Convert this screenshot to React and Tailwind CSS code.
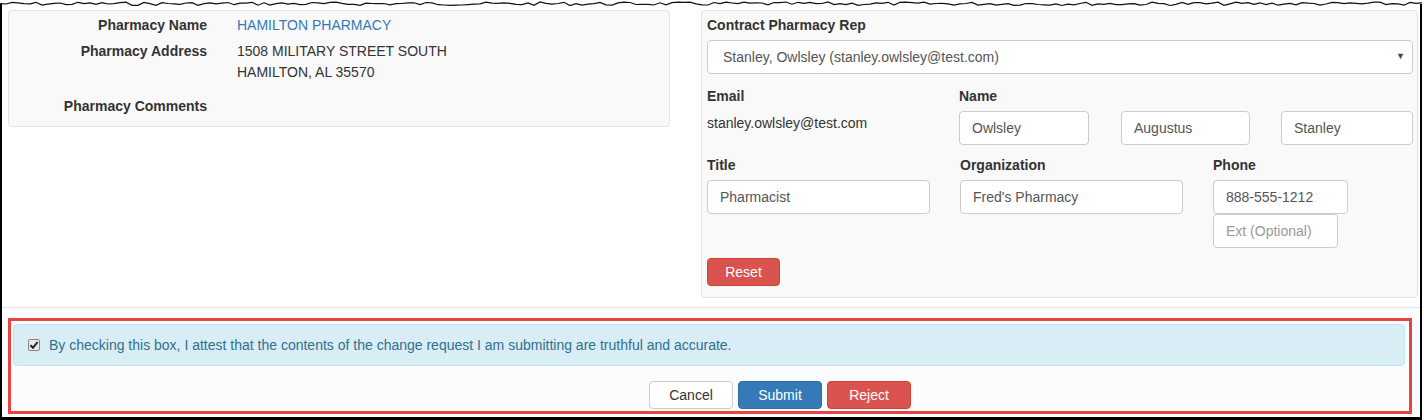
import React from 'react';

const jag = (() => {
  // torn top edge of the screenshot
  const pts = [];
  let seed = 7;
  for (let x = 0; x <= 1422; x += 6) {
    seed = (seed * 9301 + 49297) % 233280;
    const y = 2 + (seed / 233280) * 3.5;
    pts.push(`${x},${y.toFixed(1)}`);
  }
  return pts.join(' ');
})();

const Input = ({ value, placeholder, w }) => (
  <div className={`${w} h-[34px] rounded border border-[#ccc] bg-white pl-[12px] flex items-center text-[14px] ${value ? 'text-[#555]' : 'text-[#999]'}`}>
    {value || placeholder}
  </div>
);

const Label = ({ children }) => (
  <div className="font-bold text-[14px] leading-[20px] text-[#333]">{children}</div>
);

export default function App() {
  return (
    <div className="relative w-[1424px] h-[420px] bg-white font-['Liberation_Sans',Arial,sans-serif] text-[#333] text-[14px] overflow-hidden">
      <svg className="absolute left-0 top-0" width="1424" height="8">
        <polyline points={jag} fill="none" stroke="#111" strokeWidth="1.2" />
      </svg>

      <div className="mt-[4px] w-[1422px] h-[416px] border-l-2 border-r-2 border-b-[3px] border-black flex flex-col">
        {/* top section */}
        <div className="flex items-start pt-[6px] pl-[6px]">
          {/* pharmacy info */}
          <div className="w-[662px] h-[117px] rounded border border-[#e3e3e3] bg-[#f9f9f9] pt-[4px]">
            <div className="flex leading-[20px]">
              <div className="w-[198px] text-right font-bold">Pharmacy Name</div>
              <div className="ml-[30px] text-[#337ab7]">HAMILTON PHARMACY</div>
            </div>
            <div className="flex mt-[6px] leading-[21px]">
              <div className="w-[198px] text-right font-bold leading-[20px]">Pharmacy Address</div>
              <div className="ml-[30px]">
                <div>1508 MILITARY STREET SOUTH</div>
                <div>HAMILTON, AL 35570</div>
              </div>
            </div>
            <div className="flex mt-[13px] leading-[20px]">
              <div className="w-[198px] text-right font-bold">Pharmacy Comments</div>
            </div>
          </div>

          {/* contract pharmacy rep */}
          <div className="ml-[31px] w-[717px] h-[288px] rounded border border-[#e3e3e3] bg-[#f9f9f9] pl-[5px] pr-[4px] pt-[4px]">
            <Label>Contract Pharmacy Rep</Label>
            <div className="mt-[5px] h-[34px] rounded border border-[#ccc] bg-white pl-[15px] pr-[7px] flex items-center justify-between text-[#555]">
              <span>Stanley, Owlsley (stanley.owlsley@test.com)</span>
              <span className="text-[9px] text-[#444]">▼</span>
            </div>

            <div className="flex mt-[12px]">
              <div className="w-[253px]">
                <Label>Email</Label>
                <div className="mt-[7px] leading-[20px]">stanley.owlsley@test.com</div>
              </div>
              <div>
                <Label>Name</Label>
                <div className="flex mt-[5px]">
                  <Input w="w-[130px]" value="Owlsley" />
                  <div className="ml-[32px]"><Input w="w-[129px]" value="Augustus" /></div>
                  <div className="ml-[31px]"><Input w="w-[132px]" value="Stanley" /></div>
                </div>
              </div>
            </div>

            <div className="flex mt-[10px]">
              <div className="w-[253px]">
                <Label>Title</Label>
                <div className="mt-[5px]"><Input w="w-[223px]" value="Pharmacist" /></div>
              </div>
              <div className="w-[253px]">
                <Label>Organization</Label>
                <div className="mt-[5px]"><Input w="w-[223px]" value="Fred's Pharmacy" /></div>
              </div>
              <div>
                <Label>Phone</Label>
                <div className="mt-[5px]"><Input w="w-[135px]" value="888-555-1212" /></div>
                <Input w="w-[125px]" placeholder="Ext (Optional)" />
              </div>
            </div>

            <button className="mt-[10px] w-[73px] h-[28px] rounded border border-[#d43f3a] bg-[#d9534f] text-white text-[14px]">
              Reset
            </button>
          </div>
        </div>

        {/* footer */}
        <div className="mt-[9px] flex-1 border-t border-[#e5e5e5] bg-[#fbfcfe] pl-[6px] pt-[10px]">
          <div className="w-[1404px] h-[96px] border-[3px] border-[#e8433f] pt-[3px] pl-[2px] pr-[4px]">
            <div className="h-[42px] rounded border border-[#bce8f1] bg-[#d9edf7] flex items-center pl-[14px] text-[#31708f]">
              <span className="w-[12px] h-[12px] rounded-[2px] border border-[#888] bg-[#e8e8e8] flex items-center justify-center">
                <svg width="10" height="10" viewBox="0 0 10 10">
                  <path d="M1.5 5.2 L4 7.8 L8.6 2" fill="none" stroke="#222" strokeWidth="2" />
                </svg>
              </span>
              <span className="ml-[9px]">By checking this box, I attest that the contents of the change request I am submitting are truthful and accurate.</span>
            </div>
            <div className="flex gap-[5px] mt-[15px] ml-[636px]">
              <button className="w-[84px] h-[28px] rounded border border-[#ccc] bg-white text-[#333] text-[14px]">Cancel</button>
              <button className="w-[84px] h-[28px] rounded border border-[#2e6da4] bg-[#337ab7] text-white text-[14px]">Submit</button>
              <button className="w-[84px] h-[28px] rounded border border-[#d43f3a] bg-[#d9534f] text-white text-[14px]">Reject</button>
            </div>
          </div>
        </div>
      </div>
    </div>
  );
}
